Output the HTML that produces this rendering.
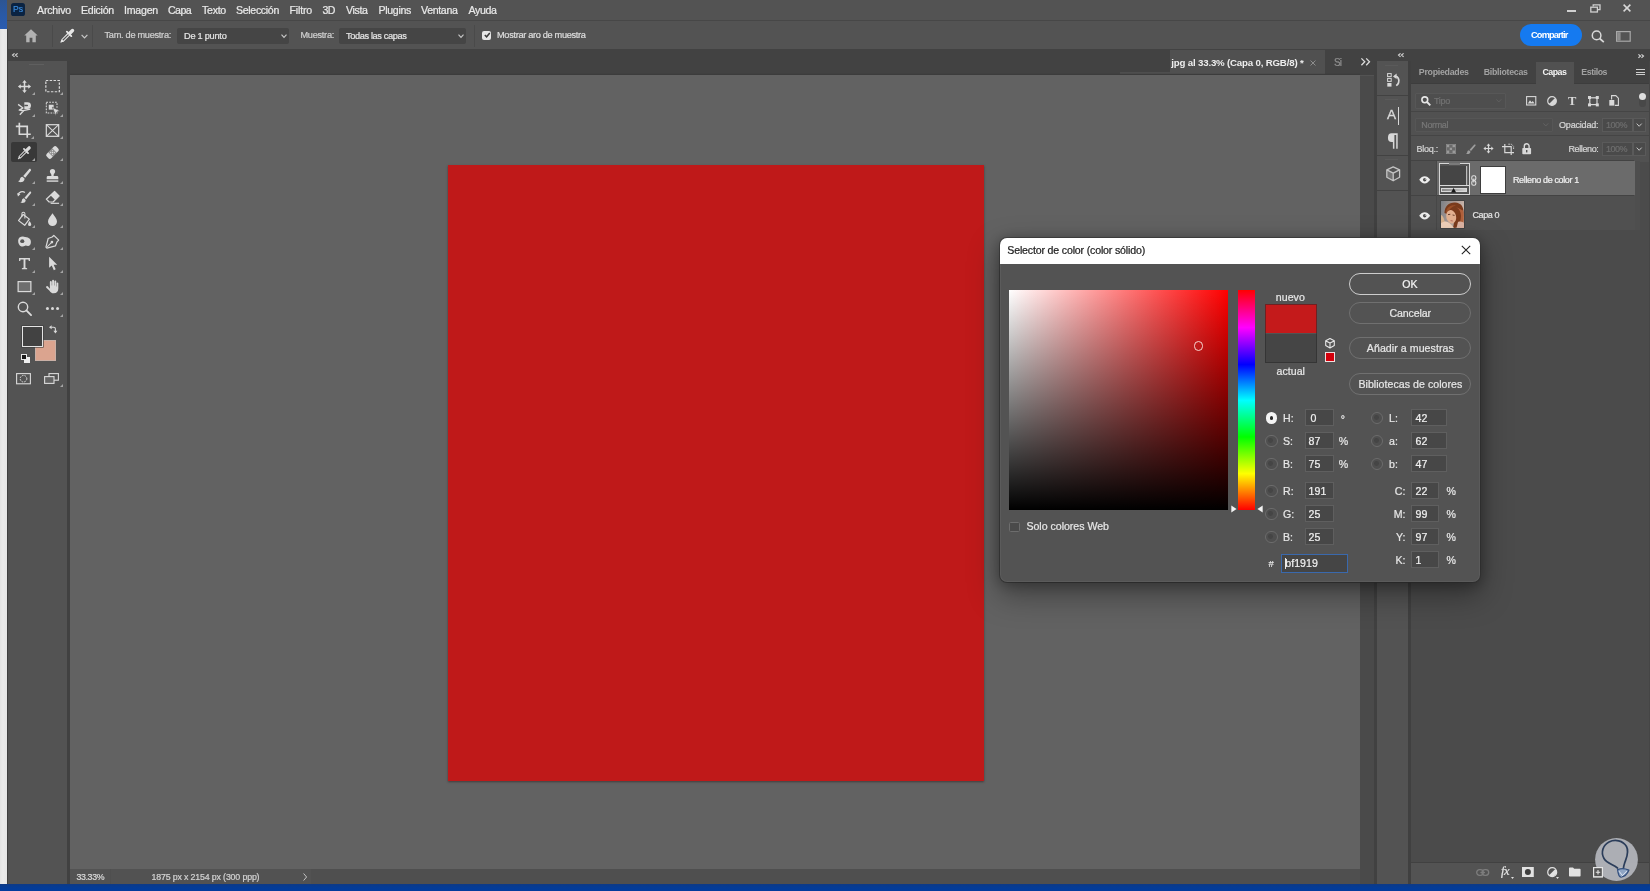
<!DOCTYPE html>
<html lang="es">
<head>
<meta charset="utf-8">
<title>Selector de color (color sólido)</title>
<style>
*{box-sizing:border-box;margin:0;padding:0}
html,body{width:1650px;height:891px;overflow:hidden;background:#535353}
body{position:relative;font-family:"Liberation Sans","DejaVu Sans",sans-serif;font-size:10px;color:#e6e6e6}
.a{position:absolute}
.t{position:absolute;white-space:nowrap;line-height:1;-webkit-text-stroke:0.22px currentColor}
svg{position:absolute;overflow:visible}
/* frame */
#lstripb{left:0;top:0;width:7px;height:29px;background:linear-gradient(#2d5592,#2959a6 50%,#2a5cb0)}
#lstripw{left:0;top:29px;width:7px;height:856px;background:linear-gradient(to right,#e4e4e4,#ebebeb 40%,#e6e6e6);box-shadow:1px 0 0 #404040}
#bottomb{left:0;top:883.6px;width:1650px;height:8px;background:linear-gradient(#0e3a85,#043c97 45%,#013c9f)}
#menubar{left:7px;top:0;width:1643px;height:20px;background:#535353}
#menuline{left:7px;top:19.8px;width:1643px;height:1.7px;background:#474747}
#optbar{left:7px;top:21px;width:1643px;height:28px;background:#535353}
#tabbar{left:7px;top:49px;width:1402px;height:26px;background:#424242}
#tabbar2{left:1409px;top:49px;width:241px;height:12px;background:#424242}
#tabscroll{left:1120px;top:72px;width:50px;height:3px;background:#4e4e4e}
#acttab{left:1170px;top:49.5px;width:155px;height:25.5px;background:#505050}
#toolbar{left:7px;top:61px;width:60.3px;height:823px;background:#535353}
#toolsel{left:10.5px;top:142px;width:26px;height:20px;background:#383838;border-radius:2px}
#canvasbg{box-shadow:0 -1.2px 0 #3c3c3c;left:69.9px;top:75px;width:1290.4px;height:793.8px;background:#626262}
#canvline{left:67.3px;top:61px;width:2.7px;height:823px;background:#414141}
#red{left:448px;top:165px;width:536px;height:615.5px;background:#bf1919;box-shadow:0 1px 2px rgba(40,30,30,.55)}
#statusbar{left:70px;top:868.5px;width:1290.3px;height:15.5px;background:#4f4f4f}
#statuszoom{left:70px;top:868.5px;width:40px;height:15.5px;background:#535353}
#statusinfo{left:111px;top:868.5px;width:200px;height:15.5px;background:#525252}
#vscroll{left:1360.3px;top:75.5px;width:15px;height:808.5px;background:#4a4a4a}
#vline{left:1374.4px;top:61px;width:2.6px;height:823px;background:#414141}
#iconstrip{left:1377px;top:61px;width:31.4px;height:823px;background:#535353}
#pline{left:1408.4px;top:61px;width:3.1px;height:823px;background:#404040}
#panel{left:1409.3px;top:61px;width:241px;height:823px;background:#4b4b4b}
#ptabs{left:1409.3px;top:61px;width:241px;height:22px;background:#424242}
#pacttab{left:1535.5px;top:61.5px;width:38.5px;height:23px;background:#515151}
#pbody{left:1409.3px;top:83.5px;width:241px;height:78px;background:#515151;box-shadow:0 -1px 0 #3d3d3d}
.pl{position:absolute;left:1409.3px;width:241px;height:1px;background:#454545}
.field{position:absolute;background:#474747;border:1px solid #5f5f5f}
.dd{position:absolute;background:#454545;border-radius:2px}
/* dialog */
#dlg{left:1000.3px;top:238px;width:479.8px;height:344px;background:#535353;border-radius:7px;box-shadow:0 12px 30px 2px rgba(0,0,0,.34),0 2px 14px 1px rgba(0,0,0,.28),0 0 0 1px rgba(66,66,66,.75),inset 0 0 0 1px rgba(255,255,255,.05);overflow:hidden}
#dlgtitle{left:0;top:0;width:100%;height:26px;background:#ffffff}
#sv{left:1009px;top:289.7px;width:218.8px;height:220px;background:linear-gradient(to top,#000,rgba(0,0,0,0)),linear-gradient(to right,#fff,#f00)}
#hue{left:1238px;top:289.7px;width:17px;height:220px;background:linear-gradient(to bottom,#f00 0%,#f0f 17.1%,#00f 33.9%,#0ff 50.2%,#0f0 66.8%,#ff0 83.5%,#f00 100%)}
.btn{position:absolute;left:1349px;width:122px;height:22.2px;border:1.7px solid #707070;border-radius:11.1px}
.radio{position:absolute;width:12.4px;height:12.4px;border-radius:50%;border:1.5px solid #6c6c6c;background:#4f4f4f}
.radio i{position:absolute;left:2.3px;top:2.3px;width:4.8px;height:4.8px;border-radius:50%;background:#454545}
</style>
</head>
<body>
<div class="a" id="menubar"></div>
<div class="a" id="menuline"></div>
<div class="a" id="optbar"></div>
<div class="a" id="tabbar"></div>
<div class="a" id="tabbar2"></div>
<div class="a" id="tabscroll"></div>
<div class="a" id="acttab"></div>
<div class="a" id="toolbar"></div>
<div class="a" id="toolsel"></div>
<div class="a" id="canvasbg"></div>
<div class="a" id="canvline"></div>
<div class="a" id="red"></div>
<div class="a" id="statusbar"></div>
<div class="a" id="statuszoom"></div>
<div class="a" id="statusinfo"></div>
<div class="a" id="vscroll"></div>
<div class="a" id="vline"></div>
<div class="a" id="iconstrip"></div>
<div class="a" id="panel"></div>
<div class="a" id="ptabs"></div>
<div class="a" id="pbody"></div>
<div class="a" id="pacttab"></div>
<div class="a" style="left:1377px;top:94.5px;width:31.4px;height:1.5px;background:#424242"></div>
<div class="a" style="left:1377px;top:154.5px;width:31.4px;height:1.5px;background:#424242"></div>
<div class="a" style="left:1377px;top:189.5px;width:31.4px;height:1.5px;background:#424242"></div>
<div class="a" style="left:1385.4px;top:64.6px;width:13px;height:1px;background:#5a5a5a"></div>
<div class="a" style="left:1385.4px;top:98.6px;width:13px;height:1px;background:#5a5a5a"></div>
<div class="a" style="left:1385.4px;top:158.6px;width:13px;height:1px;background:#5a5a5a"></div>
<svg style="left:1386.6px;top:72.8px" width="14" height="14" viewBox="0 0 14 14"><rect x="0.600" y="0.600" width="3.600" height="3" fill="none" stroke="#d8d8d8" stroke-width="1"/><rect x="0.600" y="5.400" width="3.600" height="3" fill="none" stroke="#d8d8d8" stroke-width="1"/><rect x="0.300" y="10" width="4.200" height="3.600" fill="#d8d8d8"/><path d="M7.600 3.400C11 2.800 12.600 6.800 11.600 9.600 11.200 10.800 10.400 11.800 9.200 12.600" fill="none" stroke="#d8d8d8" stroke-width="1.700"/><path d="M6 3.600L9.600 0.600V6Z" fill="#d8d8d8"/></svg>
<span class="t" style="left:1387.4px;top:108.4px;font-size:13.6px;color:#d8d8d8;will-change:transform;-webkit-text-stroke:0.35px #d8d8d8">A</span>
<div class="a" style="left:1397.8px;top:107.2px;width:1.2px;height:17.6px;background:#d8d8d8"></div>
<svg style="left:1387.2px;top:132.6px" width="11" height="16" viewBox="0 0 11 13.600" preserveAspectRatio="none"><path d="M4.600 0.300H10.700V13.400H9.200V1.800H7.400V13.400H5.900V7.600H4.600A3.650 3.650 0 0 1 4.600 0.300Z" fill="#d8d8d8"/></svg>
<svg style="left:1385.6px;top:166.4px" width="14.400" height="15.600" viewBox="0 0 14.400 15.600"><path d="M0.800 3.800L7.200 7.200V14.800L0.800 11.200Z" fill="#8c8c8c" fill-opacity="0.550"/><path d="M7.200 0.800L13.600 3.800V11.200L7.200 14.800L0.800 11.200V3.800Z M0.900 3.900L7.200 7.200L13.500 3.900 M7.200 7.200V14.700" fill="none" stroke="#c4c4c4" stroke-width="1.300" stroke-linejoin="round"/></svg>
<div class="a" style="left:1635.8px;top:69.0px;width:9.400px;height:1.300px;background:#cfcfcf"></div>
<div class="a" style="left:1635.8px;top:71.6px;width:9.400px;height:1.300px;background:#cfcfcf"></div>
<div class="a" style="left:1635.8px;top:74.2px;width:9.400px;height:1.300px;background:#cfcfcf"></div>
<div class="a" style="left:1415px;top:92.600px;width:90.600px;height:16.200px;background:#4e4e4e;border:1px solid #575757;border-radius:1px"></div>
<svg style="left:1420.600px;top:95.800px" width="10" height="10" viewBox="0 0 10 10"><circle cx="3.800" cy="3.800" r="2.900" fill="none" stroke="#e6e6e6" stroke-width="1.600"/><path d="M6 6L9.300 9.300" stroke="#e6e6e6" stroke-width="1.900"/></svg>
<svg style="left:1496px;top:99.400px" width="5.600" height="3.600" viewBox="0 0 5.600 3.600"><path d="M0.400 0.400L2.800 3L5.200 0.400" fill="none" stroke="#5e5e5e" stroke-width="1"/></svg>
<svg style="left:1525.800px;top:95.800px" width="10.400" height="9.600" viewBox="0 0 10.400 9.600"><rect x="0.600" y="0.600" width="9.200" height="8.400" fill="none" stroke="#d8d8d8" stroke-width="1.100"/><path d="M1.800 7.400L4 4.200L5.600 6.200L6.800 5L8.600 7.400Z" fill="#d8d8d8"/></svg>
<svg style="left:1547px;top:96px" width="10" height="10" viewBox="0 0 10 10"><circle cx="5" cy="5" r="4.300" fill="none" stroke="#d8d8d8" stroke-width="1.200"/><path d="M8.040 1.960A4.300 4.300 0 0 1 1.960 8.040Z" fill="#d8d8d8"/></svg>
<span class="t" style="left:1568.200px;top:94.800px;font-family:'Liberation Serif',serif;font-weight:bold;font-size:12.500px;color:#d8d8d8;will-change:transform;-webkit-text-stroke:0">T</span>
<svg style="left:1587.600px;top:95.800px" width="10.800" height="10.400" viewBox="0 0 10.800 10.400"><rect x="1.800" y="1.800" width="7.200" height="6.800" fill="none" stroke="#d8d8d8" stroke-width="1.200"/><rect x="0" y="0" width="3" height="3" fill="#d8d8d8"/><rect x="7.800" y="0" width="3" height="3" fill="#d8d8d8"/><rect x="0" y="7.400" width="3" height="3" fill="#d8d8d8"/><rect x="7.800" y="7.400" width="3" height="3" fill="#d8d8d8"/></svg>
<svg style="left:1609px;top:95.400px" width="10" height="11" viewBox="0 0 10 11"><path d="M2.600 4.400V0.600H6.800L9.400 3.200V10.400H5.800" fill="none" stroke="#d8d8d8" stroke-width="1.100"/><rect x="0.300" y="5" width="5" height="5.600" fill="#d8d8d8"/></svg>
<div class="a" style="left:1638.600px;top:92.600px;width:7.600px;height:14.400px;background:#484848;border-radius:3.800px"></div>
<div class="a" style="left:1638.800px;top:92.800px;width:7.200px;height:7.200px;background:#dedede;border-radius:50%"></div>
<div class="pl" style="top:111.3px"></div>
<div class="a" style="left:1415px;top:117.600px;width:137.600px;height:14.800px;background:#4e4e4e;border:1px solid #565656;border-radius:1px"></div>
<svg style="left:1543px;top:123.400px" width="5.600" height="3.600" viewBox="0 0 5.600 3.600"><path d="M0.400 0.400L2.800 3L5.200 0.400" fill="none" stroke="#626262" stroke-width="1"/></svg>
<div class="a" style="left:1601.600px;top:117.6px;width:31px;height:14.400px;background:#4a4a4a;border:1px solid #5a5a5a"></div>
<div class="a" style="left:1633.400px;top:117.6px;width:12.200px;height:14.400px;background:#4a4a4a;border:1px solid #5a5a5a"></div>
<svg style="left:1636.400px;top:123.0px" width="6.400" height="4.200" viewBox="0 0 6.400 4.200"><path d="M0.700 0.600L3.200 3.300L5.700 0.600" fill="none" stroke="#c6c6c6" stroke-width="1"/></svg>
<div class="a" style="left:1601.600px;top:141.6px;width:31px;height:14.400px;background:#4a4a4a;border:1px solid #5a5a5a"></div>
<div class="a" style="left:1633.400px;top:141.6px;width:12.200px;height:14.400px;background:#4a4a4a;border:1px solid #5a5a5a"></div>
<svg style="left:1636.400px;top:147.0px" width="6.400" height="4.200" viewBox="0 0 6.400 4.200"><path d="M0.700 0.600L3.200 3.300L5.700 0.600" fill="none" stroke="#c6c6c6" stroke-width="1"/></svg>
<div class="pl" style="top:135px"></div>
<svg style="left:1446px;top:144px" width="10" height="10" viewBox="0 0 10 10"><rect x="0.8" y="0.8" width="2.800" height="2.800" fill="#9a9a9a"/><rect x="0.8" y="3.6" width="2.800" height="2.800" fill="#6a6a6a"/><rect x="0.8" y="6.4" width="2.800" height="2.800" fill="#9a9a9a"/><rect x="3.6" y="0.8" width="2.800" height="2.800" fill="#6a6a6a"/><rect x="3.6" y="3.6" width="2.800" height="2.800" fill="#9a9a9a"/><rect x="3.6" y="6.4" width="2.800" height="2.800" fill="#6a6a6a"/><rect x="6.4" y="0.8" width="2.800" height="2.800" fill="#9a9a9a"/><rect x="6.4" y="3.6" width="2.800" height="2.800" fill="#6a6a6a"/><rect x="6.4" y="6.4" width="2.800" height="2.800" fill="#9a9a9a"/><rect x="0.400" y="0.400" width="9.200" height="9.200" fill="none" stroke="#8c8c8c" stroke-width="0.800"/></svg>
<svg style="left:1465px;top:143.600px" width="11" height="11" viewBox="0 0 11 11"><path d="M10.300 0.600c.400.400.400.800.100 1.200L6 7 4.600 5.700 9.100.800c.400-.400.800-.500 1.200-.200z" fill="#9e9e9e"/><path d="M4 6.300l1.400 1.300c.200 1-.500 2.100-1.700 2.400-.900.200-1.900 0-2.700-.600.900-.100 1.200-.600 1.300-1.400.100-.900.800-1.600 1.700-1.700z" fill="#9e9e9e"/></svg>
<svg style="left:1483.200px;top:143.400px" width="11" height="11" viewBox="0 0 16 16"><path d="M8 0.600L10.800 4H8.900V7.100H12V5.200L15.400 8L12 10.800V8.900H8.900V12H10.800L8 15.400L5.200 12H7.100V8.900H4V10.800L0.600 8L4 5.200V7.100H7.100V4H5.200Z" fill="#d8d8d8"/></svg>
<svg style="left:1502.400px;top:143.600px" width="12" height="11" viewBox="0 0 12 11"><path d="M2.800 0V8.600H12M0 2.600H9.200V11" fill="none" stroke="#d8d8d8" stroke-width="1.200"/><path d="M6.400 0.200L9.400 0.200L11.600 2.400L11.600 5.200" fill="none" stroke="#d8d8d8" stroke-width="1" stroke-dasharray="1.400 1"/></svg>
<svg style="left:1522px;top:142.800px" width="9.400" height="11.600" viewBox="0 0 9.400 11.600"><path d="M2.300 5V3.200a2.400 2.400 0 0 1 4.800 0V5" fill="none" stroke="#d8d8d8" stroke-width="1.400"/><rect x="0.300" y="5" width="8.800" height="6.300" rx="0.800" fill="#d8d8d8"/><rect x="4" y="7" width="1.400" height="2.400" fill="#535353"/></svg>
<div class="a" style="left:1410px;top:161.200px;width:225px;height:68.800px;background:#505050"></div>
<div class="a" style="left:1436.500px;top:161.300px;width:198.200px;height:34px;background:#6b6b6b"></div>
<div class="pl" style="top:160.4px;width:225px;background:#434343"></div>
<div class="pl" style="top:195.2px;width:225px;background:#434343"></div>
<div class="a" style="left:1436px;top:161.300px;width:1px;height:68.700px;background:#474747"></div>
<div class="a" style="left:1634.700px;top:161.200px;width:5.300px;height:68.800px;background:#4e4e4e"></div>
<svg style="left:1418.700px;top:176.2px" width="11.400" height="7.600" viewBox="0 0 11.400 7.600"><path d="M0.200 3.800C1.900 1.300 3.700 0.200 5.700 0.200S9.500 1.300 11.200 3.800C9.500 6.300 7.700 7.400 5.700 7.400S1.900 6.300 0.200 3.800Z" fill="#ededed"/><circle cx="5.700" cy="3.700" r="1.700" fill="#4a4a4a"/><circle cx="6.300" cy="3.100" r="0.600" fill="#ededed"/></svg>
<svg style="left:1418.700px;top:211.5px" width="11.400" height="7.600" viewBox="0 0 11.400 7.600"><path d="M0.200 3.800C1.900 1.300 3.700 0.200 5.700 0.200S9.500 1.300 11.200 3.800C9.500 6.300 7.700 7.400 5.700 7.400S1.900 6.300 0.200 3.800Z" fill="#ededed"/><circle cx="5.700" cy="3.700" r="1.700" fill="#4a4a4a"/><circle cx="6.300" cy="3.100" r="0.600" fill="#ededed"/></svg>
<div class="a" style="left:1438.600px;top:163.400px;width:31.400px;height:31.400px;border:1.200px solid #d6d6d6;background:#535353"></div>
<div class="a" style="left:1449px;top:163.400px;width:10.500px;height:1.200px;background:#7a7a7a"></div>
<div class="a" style="left:1440.400px;top:165.600px;width:26px;height:19.400px;background:#454545;box-shadow:1.200px 0 0 #bcbcbc"></div>
<div class="a" style="left:1439.800px;top:185.300px;width:29px;height:1.200px;background:#dadada"></div>
<div class="a" style="left:1441.200px;top:187.600px;width:25.800px;height:4.600px;background:linear-gradient(to right,#8a8a8a,#a2a2a2 45%,#cfcfcf);border:0.900px solid #d8d8d8"></div>
<svg style="left:1451.400px;top:187.800px" width="5.200" height="4.400" viewBox="0 0 5.200 4.400"><path d="M2.600 0L5.200 4.400H0Z" fill="#161616"/></svg>
<svg style="left:1471.400px;top:174.600px" width="5.600" height="11" viewBox="0 0 5.600 11"><rect x="0.800" y="0.700" width="4" height="4.600" rx="1.600" fill="none" stroke="#e0e0e0" stroke-width="1.100"/><rect x="0.800" y="5.700" width="4" height="4.600" rx="1.600" fill="none" stroke="#e0e0e0" stroke-width="1.100"/><path d="M2.800 3.400V7.600" stroke="#e0e0e0" stroke-width="1.100"/></svg>
<div class="a" style="left:1481.400px;top:166.600px;width:23.400px;height:26.400px;background:#ffffff;box-shadow:0 0 0 1px #3e3e3e"></div>
<svg style="left:1440.600px;top:201.200px;overflow:hidden" width="23.700" height="27" viewBox="0 0 23.700 27"><defs><filter id="pb" x="-20%" y="-20%" width="140%" height="140%"><feGaussianBlur stdDeviation="0.65"/></filter><linearGradient id="pbg" x1="0" y1="0" x2="1" y2="0.300"><stop offset="0" stop-color="#7b8087"/><stop offset="0.500" stop-color="#a99a94"/><stop offset="1" stop-color="#cdb8ad"/></linearGradient><clipPath id="pc"><rect x="0" y="0" width="23.700" height="27"/></clipPath></defs><rect width="23.700" height="27" fill="url(#pbg)"/><g clip-path="url(#pc)"><g filter="url(#pb)"><path d="M3.500 12C3.500 5 8 1.200 14 1.400 20 1.600 23 6 22.600 12 22.300 17 21 22 17.500 26.500L12 27 14 16Z" fill="#7a3a1d"/><path d="M15 6C19 8 21 13 19.500 19 18.800 22 17.500 24.500 16 26.500L21.500 27C23 22 23.500 15 22 9.500Z" fill="#b0613a"/><path d="M5 11C6 6 10 3.500 15 4.500 11 5.500 8 8 6.500 12.500Z" fill="#9a4f28"/><ellipse cx="10.200" cy="15.800" rx="4.900" ry="6.800" transform="rotate(-14 10.200 15.800)" fill="#e2b090"/><path d="M0 21C3 19.500 7 20.500 10 23.500L13 27H0Z" fill="#efd0b8"/><path d="M0 14C1.500 14 3 17 3.600 20.500L0 22Z" fill="#d9b38e"/><path d="M17 21C19.500 20 22 21 23.700 22.500V27H15.500Z" fill="#dcb3a2"/><path d="M7 13.600L9.300 13.300M11.600 14L13.600 14.400" stroke="#5a3322" stroke-width="0.900" fill="none"/><path d="M9.600 19.600L11.800 20" stroke="#b5655a" stroke-width="0.900" fill="none"/></g></g></svg>
<div class="a" style="left:1440.600px;top:201.200px;width:23.700px;height:27px;box-shadow:0 0 0 0.700px rgba(58,58,58,.8)"></div>
<div class="a" style="left:1410px;top:861.500px;width:240px;height:1px;background:#414141"></div>
<div class="a" style="left:1410px;top:862.500px;width:240px;height:21.500px;background:#535353"></div>
<svg style="left:1475.600px;top:868.600px" width="13.400" height="7" viewBox="0 0 13.400 7"><rect x="0.700" y="0.700" width="6.600" height="5.600" rx="2.800" fill="none" stroke="#7d7d7d" stroke-width="1.300"/><rect x="6.100" y="0.700" width="6.600" height="5.600" rx="2.800" fill="none" stroke="#7d7d7d" stroke-width="1.300"/><path d="M4.400 3.500H9" stroke="#7d7d7d" stroke-width="1.300"/></svg>
<span class="t" style="left:1501px;top:865.400px;font-size:12.500px;font-style:italic;font-family:'Liberation Serif',serif;color:#e4e4e4;letter-spacing:-0.400px;will-change:transform">fx</span>
<svg style="left:1510.600px;top:877.400px" width="3" height="2" viewBox="0 0 3 2"><path d="M0 0H3L1.500 2Z" fill="#e0e0e0"/></svg>
<svg style="left:1522px;top:866.800px" width="11.800" height="10" viewBox="0 0 11.800 10"><rect x="0" y="0" width="11.800" height="10" fill="#e2e2e2"/><circle cx="5.900" cy="5" r="3" fill="#3e3e3e"/></svg>
<svg style="left:1547px;top:867px" width="10.400" height="10.400" viewBox="0 0 10 10"><circle cx="5" cy="5" r="4.300" fill="none" stroke="#e2e2e2" stroke-width="1.200"/><path d="M8.040 1.960A4.300 4.300 0 0 1 1.960 8.040Z" fill="#e2e2e2"/></svg>
<svg style="left:1556.200px;top:877.400px" width="3" height="2" viewBox="0 0 3 2"><path d="M0 0H3L1.500 2Z" fill="#e0e0e0"/></svg>
<svg style="left:1568.800px;top:867.200px" width="11.600" height="9.600" viewBox="0 0 11.600 9.600"><path d="M0 1.200A.8.800 0 0 1 .8.400H4L5.200 1.800H10.800A.8.800 0 0 1 11.600 2.600V8.800A.8.800 0 0 1 10.800 9.600H.8A.8.800 0 0 1 0 8.800Z" fill="#e2e2e2"/></svg>
<svg style="left:1593px;top:866.800px" width="10" height="10.400" viewBox="0 0 10 10.400"><rect x="0.600" y="0.600" width="8.800" height="9.200" fill="none" stroke="#e2e2e2" stroke-width="1.200"/><path d="M5 3V7.400M2.800 5.200H7.200" stroke="#e2e2e2" stroke-width="1.100"/></svg>
<svg style="left:1616.500px;top:866.600px" width="9.600" height="10.800" viewBox="0 0 9.600 10.800"><path d="M0 1.600H9.600M3.200 1.400V0.400H6.400V1.400" fill="none" stroke="#e2e2e2" stroke-width="1.100"/><path d="M1 3H8.600L8 10.600H1.600Z" fill="#e2e2e2"/></svg>
<svg style="left:1595.300px;top:837.900px" width="43" height="43" viewBox="0 0 43 43"><circle cx="21.500" cy="21.500" r="21.400" fill="#b2b5bb" fill-opacity="0.940"/><path d="M22.500 30C17 26 12 25.500 9 20.500C5.500 14.500 8 7 14 4C20 1 28 2.500 31.500 8.500C34.500 14 31.500 19.500 29.800 24.500C29 27 28.600 28.800 28.400 30.400" fill="none" stroke="#2b3d5a" stroke-width="1.700" stroke-linecap="round"/><path d="M22.600 31.600C26 30.400 30.500 30.600 33.800 32.200C32.500 35.500 29.500 38.600 26 39.200C24 39 23 35 22.600 31.600Z" fill="#7f9cc6" fill-opacity="0.700" stroke="#34507e" stroke-width="1.300"/><path d="M24 33.200L27 37M31.800 33L26.600 38.400" stroke="#dfe6f2" stroke-width="1" fill="none"/></svg>
<svg style="left:1593px;top:866.800px" width="10" height="10.400" viewBox="0 0 10 10.400"><rect x="0.600" y="0.600" width="8.800" height="9.200" fill="#555" stroke="#e6e6e6" stroke-width="1.200"/><path d="M5 3V7.400M2.800 5.200H7.200" stroke="#e6e6e6" stroke-width="1.100"/></svg>
<div class="a" style="left:1648.500px;top:61px;width:1.500px;height:823px;background:#454545"></div>
<div class="a" id="pline"></div>
<div class="a" style="left:11px;top:2.6px;width:13.6px;height:13.6px;background:#0a2342;border-radius:2.6px"></div>
<span class="t" style="left:13px;top:5.3px;font-size:8.6px;color:#3b8ee0;letter-spacing:-0.1px;will-change:transform;-webkit-text-stroke:0.15px #3b8ee0">Ps</span>
<div class="a" style="left:1567px;top:9.6px;width:8.8px;height:2.2px;background:#d0d0d0"></div>
<svg style="left:1590px;top:4px" width="11" height="9" viewBox="0 0 11 9"><path d="M3.2 2.6V0.8H10V5.6H7.6" fill="none" stroke="#d0d0d0" stroke-width="1.3"/><rect x="0.8" y="3.2" width="6.6" height="4.8" fill="none" stroke="#d0d0d0" stroke-width="1.3"/></svg>
<svg style="left:1623.4px;top:3.8px" width="8" height="8" viewBox="0 0 8 8"><path d="M0.6 0.6L7.4 7.4M7.4 0.6L0.6 7.4" stroke="#d8d8d8" stroke-width="1.5" fill="none"/></svg>
<svg style="left:23.5px;top:29px" width="14" height="13.5" viewBox="0 0 14 13.5"><path d="M7 0.3L0.3 6.4H2.2V13.2H5.6V8.8H8.4V13.2H11.8V6.4H13.7Z" fill="#b2b2b2"/></svg>
<div class="a" style="left:51.5px;top:24.5px;width:1px;height:22px;background:#4a4a4a"></div>
<div class="a" style="left:91.8px;top:24.5px;width:1px;height:22px;background:#4a4a4a"></div>
<div class="a" style="left:474px;top:24.5px;width:1px;height:22px;background:#4a4a4a"></div>
<svg style="left:59.5px;top:28px" width="15" height="15" viewBox="0 0 15 15"><path d="M9 6L2.700 12.300" stroke="#e6e6e6" stroke-width="3.300" stroke-linecap="round" fill="none"/><path d="M8.700 6.300L3 12" stroke="#535353" stroke-width="1.150" stroke-linecap="round" fill="none"/><path d="M6.900 3.700L11.300 8.100" stroke="#e6e6e6" stroke-width="1.900" stroke-linecap="round" fill="none"/><path d="M10 5L12.500 2.500" stroke="#e6e6e6" stroke-width="3.400" stroke-linecap="round" fill="none"/><path d="M2.400 12.600L1 14" stroke="#e6e6e6" stroke-width="1.200" stroke-linecap="round" fill="none"/></svg>
<svg style="left:80.5px;top:33.6px" width="7" height="5" viewBox="0 0 7 5"><path d="M0.6 0.8L3.5 3.8L6.4 0.8" fill="none" stroke="#c8c8c8" stroke-width="1.2"/></svg>
<div class="dd" style="left:177px;top:27.6px;width:112.4px;height:16.8px"></div>
<svg style="left:280.5px;top:34.4px" width="6" height="4.4" viewBox="0 0 6 4.4"><path d="M0.5 0.6L3 3.4L5.5 0.6" fill="none" stroke="#c8c8c8" stroke-width="1.1"/></svg>
<div class="dd" style="left:339px;top:27.6px;width:127.4px;height:16.8px"></div>
<svg style="left:457.8px;top:34.4px" width="6" height="4.4" viewBox="0 0 6 4.4"><path d="M0.5 0.6L3 3.4L5.5 0.6" fill="none" stroke="#c8c8c8" stroke-width="1.1"/></svg>
<div class="a" style="left:482.3px;top:30.8px;width:9px;height:9.4px;background:#e6e6e6;border-radius:2px"></div>
<svg style="left:483.6px;top:32.4px" width="6.6" height="6" viewBox="0 0 6.6 6"><path d="M0.8 3L2.6 4.8L5.8 0.9" fill="none" stroke="#3a3a3a" stroke-width="1.5"/></svg>
<div class="a" style="left:1520px;top:23.8px;width:62px;height:22px;background:#157af0;border-radius:11px"></div>
<svg style="left:1590.6px;top:29.6px" width="14" height="13" viewBox="0 0 14 13"><circle cx="5.6" cy="5.4" r="4.3" fill="none" stroke="#d8d8d8" stroke-width="1.5"/><path d="M8.7 8.5L12.8 12.2" stroke="#d8d8d8" stroke-width="1.7" fill="none"/></svg>
<svg style="left:1616px;top:31px" width="15" height="11" viewBox="0 0 15 11"><rect x="0.6" y="0.6" width="13.6" height="9.6" fill="none" stroke="#a8a8a8" stroke-width="1.2"/><rect x="1.2" y="1.2" width="3.4" height="8.4" fill="#8e8e8e"/></svg>
<svg style="left:12px;top:53.2px" width="6" height="4.2" viewBox="0 0 6 4.2"><path d="M2.52 0.4L0.5 2.10L2.52 3.80M5.60 0.4L3.48 2.10L5.60 3.80" fill="none" stroke="#d8d8d8" stroke-width="1.1"/></svg>
<svg style="left:1398px;top:53.4px" width="6" height="4.2" viewBox="0 0 6 4.2"><path d="M2.52 0.4L0.5 2.10L2.52 3.80M5.60 0.4L3.48 2.10L5.60 3.80" fill="none" stroke="#d8d8d8" stroke-width="1.1"/></svg>
<svg style="left:1638px;top:53.6px" width="6" height="4.2" viewBox="0 0 6 4.2"><path d="M0.4 0.4L2.52 2.10L0.4 3.80M3.48 0.4L5.50 2.10L3.48 3.80" fill="none" stroke="#d8d8d8" stroke-width="1.1"/></svg>
<svg style="left:1361px;top:58.2px" width="9" height="7.6" viewBox="0 0 9 7.6"><path d="M0.4 0.4L3.78 3.80L0.4 7.20M5.22 0.4L8.50 3.80L5.22 7.20" fill="none" stroke="#dcdcdc" stroke-width="1.3"/></svg>
<svg style="left:1310.2px;top:59.6px" width="6" height="6" viewBox="0 0 6 6"><path d="M0.5 0.5L5.5 5.5M5.5 0.5L0.5 5.5" stroke="#8c8c8c" stroke-width="1" fill="none"/></svg>
<svg style="left:302.6px;top:873px" width="4.4" height="8" viewBox="0 0 4.4 8"><path d="M0.6 0.5L3.6 4L0.6 7.5" fill="none" stroke="#c4c4c4" stroke-width="1"/></svg>
<div class="a" style="left:29px;top:64px;width:15px;height:1px;background:#5f5f5f"></div>
<svg style="left:16.5px;top:78.5px" width="15" height="15" viewBox="0 0 16 16"><path d="M8 1L10.4 4H8.8V7.200H12V5.600L15 8L12 10.400V8.800H8.800V12H10.400L8 15L5.600 12H7.200V8.800H4V10.400L1 8L4 5.600V7.200H7.200V4H5.600Z" fill="#dadada"/></svg><svg style="left:31.6px;top:91.6px" width="3" height="3" viewBox="0 0 3 3"><path d="M3 0V3H0Z" fill="#a4a4a4"/></svg>
<svg style="left:44.5px;top:78.5px" width="15" height="15" viewBox="0 0 16 16"><rect x="0.900" y="1.600" width="14.400" height="12" fill="none" stroke="#dadada" stroke-width="1.300" stroke-dasharray="2.600 1.500"/></svg><svg style="left:59.6px;top:91.6px" width="3" height="3" viewBox="0 0 3 3"><path d="M3 0V3H0Z" fill="#a4a4a4"/></svg>
<svg style="left:16.5px;top:100.7px" width="15" height="15" viewBox="0 0 16 16"><path d="M1.200 3.600L6.400 7.400L2.400 9.800L7 10.400L3 14.600" fill="none" stroke="#dadada" stroke-width="1.400" stroke-linejoin="round"/><path d="M7.800 1.200h3.400a3.700 3.700 0 0 1 0 7.400H7.800Z" fill="#dadada"/><path d="M7.800 4.100h3.200a0.800 0.800 0 0 1 0 1.600H7.800Z" fill="#535353"/><path d="M6.600 10.200L14.200 8.600" stroke="#dadada" stroke-width="1.300" fill="none"/></svg><svg style="left:31.6px;top:113.8px" width="3" height="3" viewBox="0 0 3 3"><path d="M3 0V3H0Z" fill="#a4a4a4"/></svg>
<svg style="left:44.5px;top:100.7px" width="15" height="15" viewBox="0 0 16 16"><rect x="1.400" y="1.400" width="11.400" height="11.400" fill="none" stroke="#dadada" stroke-width="1.100" stroke-dasharray="1.800 1.300"/><rect x="4" y="4" width="5.200" height="5.200" fill="#dadada"/><path d="M7.800 6.600L16 10.600L12.600 11.800L11.400 15.600Z" fill="#dadada" stroke="#535353" stroke-width="0.700"/></svg><svg style="left:59.6px;top:113.8px" width="3" height="3" viewBox="0 0 3 3"><path d="M3 0V3H0Z" fill="#a4a4a4"/></svg>
<svg style="left:15.1px;top:122.2px" width="16.6" height="16.6" viewBox="0 0 16 16"><path d="M4.200 0.800V11.800H15.200" fill="none" stroke="#dadada" stroke-width="1.600"/><path d="M0.800 4.200H11.800V15.200" fill="none" stroke="#dadada" stroke-width="1.600"/></svg><svg style="left:31.0px;top:136.1px" width="3" height="3" viewBox="0 0 3 3"><path d="M3 0V3H0Z" fill="#a4a4a4"/></svg>
<svg style="left:44.5px;top:123.0px" width="15" height="15" viewBox="0 0 16 16"><rect x="1.400" y="1.800" width="13.200" height="12.400" fill="none" stroke="#dadada" stroke-width="1.300"/><path d="M1.400 1.800L14.600 14.200M14.600 1.800L1.400 14.200" stroke="#dadada" stroke-width="1.100" fill="none"/></svg><svg style="left:59.6px;top:136.1px" width="3" height="3" viewBox="0 0 3 3"><path d="M3 0V3H0Z" fill="#a4a4a4"/></svg>
<svg style="left:16.5px;top:145.2px" width="15" height="15" viewBox="0 0 16 16"><g transform="translate(0.5,0.5)"><path d="M9 6L2.700 12.300" stroke="#dadada" stroke-width="3.300" stroke-linecap="round" fill="none"/><path d="M8.700 6.300L3 12" stroke="#383838" stroke-width="1.150" stroke-linecap="round" fill="none"/><path d="M6.900 3.700L11.300 8.100" stroke="#dadada" stroke-width="1.900" stroke-linecap="round" fill="none"/><path d="M10 5L12.500 2.500" stroke="#dadada" stroke-width="3.400" stroke-linecap="round" fill="none"/><path d="M2.400 12.600L1 14" stroke="#dadada" stroke-width="1.200" stroke-linecap="round" fill="none"/></g></svg><svg style="left:31.6px;top:158.3px" width="3" height="3" viewBox="0 0 3 3"><path d="M3 0V3H0Z" fill="#a4a4a4"/></svg>
<svg style="left:44.5px;top:145.2px" width="15" height="15" viewBox="0 0 16 16"><g transform="rotate(-45 8 8)"><rect x="0.600" y="4.600" width="14.800" height="6.800" rx="2.200" fill="#dadada"/><rect x="5" y="4.600" width="6" height="6.800" fill="#535353" opacity="0.550"/><circle cx="6.600" cy="6.600" r="0.700" fill="#dadada"/><circle cx="9.400" cy="6.600" r="0.700" fill="#dadada"/><circle cx="6.600" cy="9.400" r="0.700" fill="#dadada"/><circle cx="9.400" cy="9.400" r="0.700" fill="#dadada"/><circle cx="8" cy="8" r="0.700" fill="#dadada"/></g></svg><svg style="left:59.6px;top:158.3px" width="3" height="3" viewBox="0 0 3 3"><path d="M3 0V3H0Z" fill="#a4a4a4"/></svg>
<svg style="left:16.5px;top:167.5px" width="15" height="15" viewBox="0 0 16 16"><path d="M14.600 1.200c.600.500.500 1.200.100 1.800L8.800 10.400 6.600 8.400l6.200-7c.500-.600 1.200-.700 1.800-.200z" fill="#dadada"/><path d="M5.800 9.200l2.200 2c.300 1.600-.700 3.200-2.600 3.700-1.400.400-3 .100-4.200-.900 1.400-.200 1.800-.900 2-2.200.200-1.400 1.200-2.500 2.600-2.600z" fill="#dadada"/></svg><svg style="left:31.6px;top:180.6px" width="3" height="3" viewBox="0 0 3 3"><path d="M3 0V3H0Z" fill="#a4a4a4"/></svg>
<svg style="left:44.5px;top:167.5px" width="15" height="15" viewBox="0 0 16 16"><path d="M8 1a2.800 2.800 0 0 1 2.800 2.800c0 1-.500 1.700-1.100 2.400-.400.500-.500 1.100-.500 1.800v.600h3.600c.800 0 1.400.600 1.400 1.400V12H1.800v-2c0-.800.600-1.400 1.400-1.400h3.600V8c0-.700-.100-1.300-.500-1.800-.600-.700-1.100-1.400-1.100-2.400A2.800 2.800 0 0 1 8 1z" fill="#dadada"/><rect x="1.800" y="13.200" width="12.400" height="1.500" fill="#dadada"/></svg><svg style="left:59.6px;top:180.6px" width="3" height="3" viewBox="0 0 3 3"><path d="M3 0V3H0Z" fill="#a4a4a4"/></svg>
<svg style="left:16.5px;top:189.7px" width="15" height="15" viewBox="0 0 16 16"><path d="M14.800 1.800c.500.500.500 1.100.100 1.600L9.800 9.800 8 8.200l5.300-6.200c.400-.500 1-.600 1.500-.200z" fill="#dadada"/><path d="M7.400 8.900l1.800 1.700c.200 1.300-.600 2.700-2.200 3.100-1.100.300-2.400.100-3.400-.700 1.100-.200 1.500-.800 1.600-1.800.200-1.200 1-2.200 2.200-2.300z" fill="#dadada"/><path d="M1.200 5.200A4.600 4.600 0 0 1 8.400 2.600" fill="none" stroke="#dadada" stroke-width="1.300"/><path d="M0.200 3.200L3.600 4.600L1 7Z" fill="#dadada"/></svg><svg style="left:31.6px;top:202.8px" width="3" height="3" viewBox="0 0 3 3"><path d="M3 0V3H0Z" fill="#a4a4a4"/></svg>
<svg style="left:44.5px;top:189.7px" width="15" height="15" viewBox="0 0 16 16"><path d="M10.200 1.600L15 6.400 8.600 12.800H4.400L1.400 9.800Z" fill="none" stroke="#dadada" stroke-width="1.300" stroke-linejoin="round"/><path d="M10.200 1.600L15 6.400 10.800 10.600 6 5.800Z" fill="#dadada"/><path d="M6 14.200H15" stroke="#dadada" stroke-width="1.300"/></svg><svg style="left:59.6px;top:202.8px" width="3" height="3" viewBox="0 0 3 3"><path d="M3 0V3H0Z" fill="#a4a4a4"/></svg>
<svg style="left:16.5px;top:211.9px" width="15" height="15" viewBox="0 0 16 16"><path d="M7.400 2.600L13.200 8.400 7.400 14.200 1.600 8.400Z" fill="none" stroke="#dadada" stroke-width="1.300" stroke-linejoin="round" transform="rotate(-8 7.400 8.400)"/><path d="M5.200 5.200V1.800a1.600 1.600 0 0 1 3.200 0V7" fill="none" stroke="#dadada" stroke-width="1.100"/><path d="M13.400 9.600c.900 1.400 1.800 2.600 1.800 3.600a1.700 1.700 0 0 1-3.400 0c0-1 .800-2.200 1.600-3.600z" fill="#dadada"/></svg><svg style="left:31.6px;top:225.0px" width="3" height="3" viewBox="0 0 3 3"><path d="M3 0V3H0Z" fill="#a4a4a4"/></svg>
<svg style="left:44.5px;top:211.9px" width="15" height="15" viewBox="0 0 16 16"><path d="M8 1.200c2.200 3.200 4.800 6 4.800 9a4.800 4.800 0 0 1-9.600 0c0-3 2.600-5.800 4.800-9z" fill="#dadada"/></svg><svg style="left:59.6px;top:225.0px" width="3" height="3" viewBox="0 0 3 3"><path d="M3 0V3H0Z" fill="#a4a4a4"/></svg>
<svg style="left:16.5px;top:234.2px" width="15" height="15" viewBox="0 0 16 16"><path d="M1.200 7.200C1.200 4 4 2.400 7.200 2.800c2.400.300 3.800.400 5.600 1.600 1.600 1 2.200 2.600 2 4.600-.200 2-.800 3.400-2.600 3.800-1.400.300-2-.600-3.400-.400-1.600.200-2.200 1.200-4 .800C2.400 12.700 1.200 10 1.200 7.200z" fill="#dadada"/><ellipse cx="5.600" cy="7.600" rx="2.200" ry="2" fill="#535353"/></svg><svg style="left:31.6px;top:247.3px" width="3" height="3" viewBox="0 0 3 3"><path d="M3 0V3H0Z" fill="#a4a4a4"/></svg>
<svg style="left:44.5px;top:234.2px" width="15" height="15" viewBox="0 0 16 16"><path d="M9.400 1.400L14.600 6.600 12.800 8.400 11.200 12.600 2 15 1 14 3.400 4.800 7.600 3.200Z" fill="none" stroke="#dadada" stroke-width="1.300" stroke-linejoin="round"/><path d="M1.600 14.400L6.800 9.200" stroke="#dadada" stroke-width="1.100"/><circle cx="7.400" cy="8.600" r="1.400" fill="#dadada"/></svg><svg style="left:59.6px;top:247.3px" width="3" height="3" viewBox="0 0 3 3"><path d="M3 0V3H0Z" fill="#a4a4a4"/></svg>
<svg style="left:16.5px;top:256.4px" width="15" height="15" viewBox="0 0 16 16"><path d="M2.200 2H13.800V5.200H12.600L12.200 3.600H9V12.600L10.800 13V14H5.200V13L7 12.600V3.600H3.800L3.400 5.200H2.200Z" fill="#dadada"/></svg><svg style="left:31.6px;top:269.5px" width="3" height="3" viewBox="0 0 3 3"><path d="M3 0V3H0Z" fill="#a4a4a4"/></svg>
<svg style="left:44.5px;top:256.4px" width="15" height="15" viewBox="0 0 16 16"><path d="M4.400 0.800L13 9.200H9.200L11.400 14.200 9.400 15.100 7.200 10 4.400 12.600Z" fill="#dadada"/></svg><svg style="left:59.6px;top:269.5px" width="3" height="3" viewBox="0 0 3 3"><path d="M3 0V3H0Z" fill="#a4a4a4"/></svg>
<svg style="left:16.5px;top:278.7px" width="15" height="15" viewBox="0 0 16 16"><rect x="1.200" y="2.800" width="13.600" height="10.600" fill="#6e6e6e" stroke="#dadada" stroke-width="1.300"/></svg><svg style="left:31.6px;top:291.8px" width="3" height="3" viewBox="0 0 3 3"><path d="M3 0V3H0Z" fill="#a4a4a4"/></svg>
<svg style="left:44.5px;top:278.7px" width="15" height="15" viewBox="0 0 16 16"><path d="M5.200 8.200V3.200a1 1 0 0 1 2 0V7h.400V1.800a1 1 0 0 1 2 0V7h.400V2.600a1 1 0 0 1 2 0V8h.400V4.600a.900.900 0 0 1 1.800 0V10c0 3.200-1.800 5.200-4.800 5.200-2.400 0-3.600-1-4.800-3L1.400 9.200c-.400-.700-.200-1.300.300-1.600.600-.300 1.200-.100 1.600.500L4.800 10h.400z" fill="#dadada"/></svg><svg style="left:59.6px;top:291.8px" width="3" height="3" viewBox="0 0 3 3"><path d="M3 0V3H0Z" fill="#a4a4a4"/></svg>
<svg style="left:16.5px;top:300.9px" width="15" height="15" viewBox="0 0 16 16"><circle cx="6.400" cy="6.400" r="5" fill="none" stroke="#dadada" stroke-width="1.500"/><path d="M10 10L15 15" stroke="#dadada" stroke-width="2" stroke-linecap="round"/></svg>
<svg style="left:44.5px;top:300.9px" width="15" height="15" viewBox="0 0 16 16"><circle cx="2.600" cy="8" r="1.600" fill="#dadada"/><circle cx="8" cy="8" r="1.600" fill="#dadada"/><circle cx="13.400" cy="8" r="1.600" fill="#dadada"/></svg><svg style="left:59.6px;top:314.0px" width="3" height="3" viewBox="0 0 3 3"><path d="M3 0V3H0Z" fill="#a4a4a4"/></svg>
<div class="a" style="left:34.8px;top:340px;width:21.4px;height:20.8px;background:#dba48f;border:1px solid #c9b0a6"></div>
<div class="a" style="left:21.8px;top:325.6px;width:21.6px;height:21.6px;background:#424242;border:1.3px solid #e4e4e4;box-shadow:0 0 0 0.6px #3c3c3c"></div>
<svg style="left:48.8px;top:325.4px" width="8.400" height="8.400" viewBox="0 0 8.400 8.400"><path d="M2.200 2.200H4.600a1.800 1.800 0 0 1 1.800 1.800V6" fill="none" stroke="#dadada" stroke-width="1.100"/><path d="M0 2.200L2.600 0.200V4.200Z" fill="#dadada"/><path d="M6.400 8.400L4.400 5.800H8.400Z" fill="#dadada"/></svg>
<div class="a" style="left:24.200px;top:357px;width:6px;height:6px;background:#efefef"></div>
<div class="a" style="left:20.800px;top:353.800px;width:6.400px;height:6.400px;background:#1a1a1a;border:1px solid #e8e8e8"></div>
<svg style="left:16px;top:372.6px" width="15" height="11.400" viewBox="0 0 15 11.400"><rect x="0.600" y="0.600" width="13.800" height="10.200" fill="none" stroke="#dadada" stroke-width="1.100"/><circle cx="7.500" cy="5.700" r="3.300" fill="none" stroke="#dadada" stroke-width="1" stroke-dasharray="1.600 1.100"/></svg>
<svg style="left:44.200px;top:372.600px" width="15" height="11" viewBox="0 0 15 11"><rect x="5" y="0.600" width="9.400" height="6.600" fill="#535353" stroke="#dadada" stroke-width="1.100"/><rect x="0.600" y="3.600" width="9.400" height="6.800" fill="#636363" stroke="#dadada" stroke-width="1.100"/></svg>
<svg style="left:59.6px;top:383.6px" width="3" height="3" viewBox="0 0 3 3"><path d="M3 0V3H0Z" fill="#a4a4a4"/></svg>
<div class="a" id="dlg"><div class="a" id="dlgtitle"></div></div>
<div class="a" id="sv"></div>
<div class="a" id="hue"></div>
<svg style="left:1461.2px;top:244.8px" width="10" height="10" viewBox="0 0 10 10"><path d="M0.8 0.8L9.2 9.2M9.2 0.8L0.8 9.2" stroke="#222" stroke-width="1.1" fill="none"/></svg>
<div class="btn" style="top:272.6px;border-color:#cdcdcd;border-width:1.8px"></div>
<div class="btn" style="top:302.3px"></div>
<div class="btn" style="top:337.1px"></div>
<div class="btn" style="top:373.2px"></div>
<div class="a" style="left:1265px;top:304.2px;width:51.7px;height:29.3px;background:#c41a1b"></div>
<div class="a" style="left:1265px;top:333.5px;width:51.7px;height:29px;background:#454545"></div>
<div class="a" style="left:1264.5px;top:303.7px;width:52.7px;height:59.3px;border:1px solid rgba(40,40,40,.55)"></div>
<svg style="left:1324.5px;top:338px" width="10" height="10.5" viewBox="0 0 10 10.5"><path d="M5 0.6L9.3 2.8V7.6L5 9.9L0.7 7.6V2.8Z M0.9 2.9L5 5.1L9.1 2.9 M5 5.1V9.8" fill="none" stroke="#e8e8e8" stroke-width="1.1" stroke-linejoin="round"/></svg>
<div class="a" style="left:1325px;top:351.5px;width:10px;height:10.3px;background:#d4000c;border:1px solid #f0dede"></div>
<div class="a" style="left:1193.6px;top:340.9px;width:9.8px;height:9.8px;border-radius:50%;border:1.1px solid #f7d6d0"></div>
<svg style="left:1230.8px;top:505px" width="6" height="8" viewBox="0 0 6 8"><path d="M0.3 0.6L5.6 4L0.3 7.4Z" fill="#f4f4f4"/></svg>
<svg style="left:1256.6px;top:505px" width="6" height="8" viewBox="0 0 6 8"><path d="M5.7 0.6L0.4 4L5.7 7.4Z" fill="#f4f4f4"/></svg>
<div class="a" style="left:1009px;top:521.6px;width:10.6px;height:10.6px;background:#4a4a4a;border:1.2px solid #6d6d6d;border-radius:1.5px"></div>
<div class="a" style="left:1265.8px;top:412.3px;width:11.4px;height:11.4px;border-radius:50%;background:#f4f4f4"></div>
<div class="a" style="left:1269.6px;top:416.1px;width:3.8px;height:3.8px;border-radius:50%;background:#2a2a2a"></div>
<div class="radio" style="left:1265.2px;top:434.8px"><i></i></div>
<div class="radio" style="left:1265.2px;top:457.8px"><i></i></div>
<div class="radio" style="left:1265.2px;top:484.5px"><i></i></div>
<div class="radio" style="left:1265.2px;top:507.8px"><i></i></div>
<div class="radio" style="left:1265.2px;top:530.8px"><i></i></div>
<div class="radio" style="left:1371px;top:411.8px"><i></i></div>
<div class="radio" style="left:1371px;top:434.8px"><i></i></div>
<div class="radio" style="left:1371px;top:457.8px"><i></i></div>
<div class="field" style="left:1305px;top:409.4px;width:29px;height:17px"></div>
<div class="field" style="left:1305px;top:432.4px;width:29px;height:17px"></div>
<div class="field" style="left:1305px;top:455.4px;width:29px;height:17px"></div>
<div class="field" style="left:1305px;top:482.1px;width:29px;height:17px"></div>
<div class="field" style="left:1305px;top:505.4px;width:29px;height:17px"></div>
<div class="field" style="left:1305px;top:528.4px;width:29px;height:17px"></div>
<div class="field" style="left:1411.3px;top:409.4px;width:35.3px;height:17px"></div>
<div class="field" style="left:1411.3px;top:432.4px;width:35.3px;height:17px"></div>
<div class="field" style="left:1411.3px;top:455.4px;width:35.3px;height:17px"></div>
<div class="field" style="left:1411.3px;top:482.1px;width:27.8px;height:17px"></div>
<div class="field" style="left:1411.3px;top:505.4px;width:27.8px;height:17px"></div>
<div class="field" style="left:1411.3px;top:528.4px;width:27.8px;height:17px"></div>
<div class="field" style="left:1411.3px;top:551.4px;width:27.8px;height:17px"></div>
<div class="a" style="left:1280.6px;top:554px;width:67px;height:18.6px;background:#454545;border:1.6px solid #3a69ad"></div>
<div class="a" style="left:1284.6px;top:557.5px;width:1px;height:11.5px;background:#e8e8e8"></div>
<div class="a" id="lstripb"></div>
<div class="a" id="lstripw"></div>
<div class="a" id="bottomb"></div>
<div class="a" id="txt" style="left:0;top:0;width:1650px;height:891px;will-change:transform">
<span class="t" style="left:37.00px;top:5.02px;font-size:10.6px;color:#e9e9e9;letter-spacing:-0.189px;">Archivo</span>
<span class="t" style="left:81.00px;top:5.02px;font-size:10.6px;color:#e9e9e9;letter-spacing:-0.249px;">Edición</span>
<span class="t" style="left:124.00px;top:5.02px;font-size:10.6px;color:#e9e9e9;letter-spacing:-0.222px;">Imagen</span>
<span class="t" style="left:168.00px;top:5.02px;font-size:10.6px;color:#e9e9e9;letter-spacing:-0.581px;">Capa</span>
<span class="t" style="left:202.00px;top:5.02px;font-size:10.6px;color:#e9e9e9;letter-spacing:-0.264px;">Texto</span>
<span class="t" style="left:236.00px;top:5.02px;font-size:10.6px;color:#e9e9e9;letter-spacing:-0.326px;">Selección</span>
<span class="t" style="left:289.50px;top:5.02px;font-size:10.6px;color:#e9e9e9;letter-spacing:-0.174px;">Filtro</span>
<span class="t" style="left:322.50px;top:5.02px;font-size:10.6px;color:#e9e9e9;letter-spacing:-0.521px;">3D</span>
<span class="t" style="left:346.00px;top:5.02px;font-size:10.6px;color:#e9e9e9;letter-spacing:-0.372px;">Vista</span>
<span class="t" style="left:378.50px;top:5.02px;font-size:10.6px;color:#e9e9e9;letter-spacing:-0.321px;">Plugins</span>
<span class="t" style="left:421.00px;top:5.02px;font-size:10.6px;color:#e9e9e9;letter-spacing:-0.340px;">Ventana</span>
<span class="t" style="left:468.50px;top:5.02px;font-size:10.6px;color:#e9e9e9;letter-spacing:-0.369px;">Ayuda</span>
<span class="t" style="left:104.50px;top:31.11px;font-size:9.2px;color:#d0d0d0;letter-spacing:-0.280px;">Tam. de muestra:</span>
<span class="t" style="left:184.00px;top:31.71px;font-size:9.2px;color:#e4e4e4;letter-spacing:-0.245px;">De 1 punto</span>
<span class="t" style="left:300.50px;top:31.11px;font-size:9.2px;color:#d0d0d0;letter-spacing:-0.280px;">Muestra:</span>
<span class="t" style="left:346.00px;top:31.71px;font-size:9.2px;color:#e4e4e4;letter-spacing:-0.359px;">Todas las capas</span>
<span class="t" style="left:497.00px;top:31.11px;font-size:9.2px;color:#dedede;letter-spacing:-0.313px;">Mostrar aro de muestra</span>
<span class="t" style="left:1531.00px;top:30.91px;font-size:9.2px;color:#ffffff;letter-spacing:-0.811px;font-weight:bold;-webkit-text-stroke:0;">Compartir</span>
<span class="t" style="left:1171.30px;top:58.06px;font-size:9.7px;color:#eeeeee;letter-spacing:-0.187px;font-weight:bold;-webkit-text-stroke:0;">jpg al 33.3% (Capa 0, RGB/8) *</span>
<span class="t" style="left:1334.00px;top:57.72px;font-size:10px;color:#8e8e8e;letter-spacing:-0.900px;">Si</span>
<span class="t" style="left:76.40px;top:872.70px;font-size:8.8px;color:#dadada;letter-spacing:-0.339px;">33.33%</span>
<span class="t" style="left:151.50px;top:872.70px;font-size:8.8px;color:#d2d2d2;letter-spacing:-0.152px;">1875 px x 2154 px (300 ppp)</span>
<span class="t" style="left:1418.80px;top:67.90px;font-size:8.8px;color:#a2a2a2;letter-spacing:-0.264px;font-weight:bold;-webkit-text-stroke:0;">Propiedades</span>
<span class="t" style="left:1483.80px;top:67.90px;font-size:8.8px;color:#a2a2a2;letter-spacing:-0.285px;font-weight:bold;-webkit-text-stroke:0;">Bibliotecas</span>
<span class="t" style="left:1542.50px;top:67.90px;font-size:8.8px;color:#f4f4f4;letter-spacing:-0.501px;font-weight:bold;-webkit-text-stroke:0;">Capas</span>
<span class="t" style="left:1581.30px;top:67.90px;font-size:8.8px;color:#a2a2a2;letter-spacing:-0.449px;font-weight:bold;-webkit-text-stroke:0;">Estilos</span>
<span class="t" style="left:1434.00px;top:96.80px;font-size:9px;color:#727272;letter-spacing:-0.293px;">Tipo</span>
<span class="t" style="left:1421.30px;top:121.20px;font-size:9px;color:#777777;letter-spacing:-0.384px;">Normal</span>
<span class="t" style="left:1559.00px;top:121.10px;font-size:9px;color:#d4d4d4;letter-spacing:-0.181px;">Opacidad:</span>
<span class="t" style="left:1606.00px;top:121.20px;font-size:9px;color:#6e6e6e;letter-spacing:-0.505px;">100%</span>
<span class="t" style="left:1416.60px;top:144.80px;font-size:9px;color:#d4d4d4;letter-spacing:-0.269px;">Bloq.:</span>
<span class="t" style="left:1568.50px;top:144.60px;font-size:9px;color:#d4d4d4;letter-spacing:-0.390px;">Relleno:</span>
<span class="t" style="left:1606.00px;top:144.60px;font-size:9px;color:#6e6e6e;letter-spacing:-0.505px;">100%</span>
<span class="t" style="left:1513.00px;top:176.00px;font-size:9px;color:#f0f0f0;letter-spacing:-0.375px;">Relleno de color 1</span>
<span class="t" style="left:1472.50px;top:211.00px;font-size:9px;color:#e2e2e2;letter-spacing:-0.387px;">Capa 0</span>
<span class="t" style="left:1007.30px;top:245.42px;font-size:10.6px;color:#1c1c1c;letter-spacing:-0.168px;">Selector de color (color sólido)</span>
<span class="t" style="left:1275.70px;top:292.42px;font-size:10.6px;color:#e6e6e6;letter-spacing:0.087px;">nuevo</span>
<span class="t" style="left:1276.50px;top:366.02px;font-size:10.6px;color:#e6e6e6;letter-spacing:0.039px;">actual</span>
<span class="t" style="left:1402.30px;top:278.82px;font-size:10.6px;color:#f2f2f2;letter-spacing:-0.153px;">OK</span>
<span class="t" style="left:1389.50px;top:307.82px;font-size:10.6px;color:#e6e6e6;letter-spacing:-0.112px;">Cancelar</span>
<span class="t" style="left:1366.80px;top:343.02px;font-size:10.6px;color:#e6e6e6;letter-spacing:0.061px;">Añadir a muestras</span>
<span class="t" style="left:1358.40px;top:378.82px;font-size:10.6px;color:#e6e6e6;letter-spacing:0.043px;">Bibliotecas de colores</span>
<span class="t" style="left:1026.40px;top:521.22px;font-size:10.6px;color:#e6e6e6;letter-spacing:-0.014px;">Solo colores Web</span>
<span class="t" style="left:1283.00px;top:412.82px;font-size:10.6px;color:#e6e6e6;">H:</span>
<span class="t" style="left:1310.60px;top:413.22px;font-size:10.6px;color:#f0f0f0;">0</span>
<span class="t" style="left:1283.00px;top:435.82px;font-size:10.6px;color:#e6e6e6;">S:</span>
<span class="t" style="left:1308.60px;top:436.22px;font-size:10.6px;color:#f0f0f0;">87</span>
<span class="t" style="left:1283.00px;top:458.82px;font-size:10.6px;color:#e6e6e6;">B:</span>
<span class="t" style="left:1308.60px;top:459.22px;font-size:10.6px;color:#f0f0f0;">75</span>
<span class="t" style="left:1283.00px;top:485.52px;font-size:10.6px;color:#e6e6e6;">R:</span>
<span class="t" style="left:1308.60px;top:485.92px;font-size:10.6px;color:#f0f0f0;">191</span>
<span class="t" style="left:1283.00px;top:508.82px;font-size:10.6px;color:#e6e6e6;">G:</span>
<span class="t" style="left:1308.60px;top:509.22px;font-size:10.6px;color:#f0f0f0;">25</span>
<span class="t" style="left:1283.00px;top:531.82px;font-size:10.6px;color:#e6e6e6;">B:</span>
<span class="t" style="left:1308.60px;top:532.22px;font-size:10.6px;color:#f0f0f0;">25</span>
<span class="t" style="left:1340.80px;top:414.22px;font-size:10.6px;color:#e6e6e6;">°</span>
<span class="t" style="left:1338.80px;top:436.42px;font-size:10.6px;color:#e6e6e6;letter-spacing:0.180px;">%</span>
<span class="t" style="left:1338.80px;top:459.42px;font-size:10.6px;color:#e6e6e6;letter-spacing:0.180px;">%</span>
<span class="t" style="left:1389.00px;top:412.82px;font-size:10.6px;color:#e6e6e6;">L:</span>
<span class="t" style="left:1415.60px;top:413.22px;font-size:10.6px;color:#f0f0f0;">42</span>
<span class="t" style="left:1389.00px;top:435.82px;font-size:10.6px;color:#e6e6e6;">a:</span>
<span class="t" style="left:1415.60px;top:436.22px;font-size:10.6px;color:#f0f0f0;">62</span>
<span class="t" style="left:1389.00px;top:458.82px;font-size:10.6px;color:#e6e6e6;">b:</span>
<span class="t" style="left:1415.60px;top:459.22px;font-size:10.6px;color:#f0f0f0;">47</span>
<span class="t" style="left:1394.81px;top:485.52px;font-size:10.6px;color:#e6e6e6;">C:</span>
<span class="t" style="left:1415.60px;top:485.92px;font-size:10.6px;color:#f0f0f0;">22</span>
<span class="t" style="left:1446.50px;top:486.12px;font-size:10.6px;color:#e6e6e6;letter-spacing:0.080px;">%</span>
<span class="t" style="left:1393.63px;top:508.82px;font-size:10.6px;color:#e6e6e6;">M:</span>
<span class="t" style="left:1415.60px;top:509.22px;font-size:10.6px;color:#f0f0f0;">99</span>
<span class="t" style="left:1446.50px;top:509.42px;font-size:10.6px;color:#e6e6e6;letter-spacing:0.080px;">%</span>
<span class="t" style="left:1395.98px;top:531.82px;font-size:10.6px;color:#e6e6e6;">Y:</span>
<span class="t" style="left:1415.60px;top:532.22px;font-size:10.6px;color:#f0f0f0;">97</span>
<span class="t" style="left:1446.50px;top:532.42px;font-size:10.6px;color:#e6e6e6;letter-spacing:0.080px;">%</span>
<span class="t" style="left:1395.39px;top:554.82px;font-size:10.6px;color:#e6e6e6;">K:</span>
<span class="t" style="left:1415.60px;top:555.22px;font-size:10.6px;color:#f0f0f0;">1</span>
<span class="t" style="left:1446.50px;top:555.42px;font-size:10.6px;color:#e6e6e6;letter-spacing:0.080px;">%</span>
<span class="t" style="left:1268.40px;top:558.61px;font-size:9.4px;color:#e6e6e6;letter-spacing:0.900px;">#</span>
<span class="t" style="left:1285.20px;top:558.22px;font-size:10.6px;color:#f0f0f0;letter-spacing:0.066px;">bf1919</span>
</div>
</body>
</html>
